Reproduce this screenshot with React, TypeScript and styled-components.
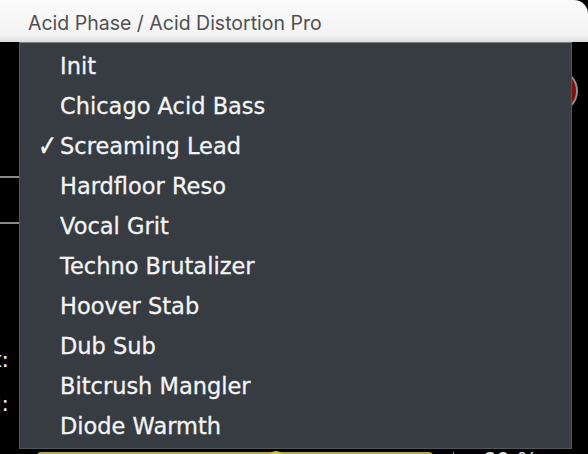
import React from "react";
import styled, { createGlobalStyle } from "styled-components";

const Global = createGlobalStyle`
  html, body { margin: 0; padding: 0; background: #000; }
  body { width: 588px; height: 454px; overflow: hidden; }
  * { box-sizing: border-box; }
`;

const Window = styled.div`
  position: relative;
  width: 588px;
  height: 454px;
  background: #000;
  overflow: hidden;
  display: flex;
  flex-direction: column;
`;

const TitleBar = styled.div`
  height: 42px;
  flex: none;
  display: flex;
  align-items: center;
  padding: 3px 0 0 28px;
  background: linear-gradient(#fbfbfb, #f3f3f3 85%, #dcdcdc);
  border-top-right-radius: 14px;
  font-family: Inter, "Open Sans", sans-serif;
  font-size: 19.5px;
  color: #505050;
`;

const Body = styled.div`
  flex: 1;
  display: flex;
  flex-direction: column;
  font-family: "DejaVu Sans", sans-serif;
  color: #f2f2f2;
`;

const KnobRow = styled.div`
  height: 98px;
  display: flex;
  align-items: center;
  justify-content: flex-end;
  padding-right: 10px;
`;

const Knob = styled.div`
  width: 44px;
  height: 44px;
  border-radius: 50%;
  border: 2px solid #8e9196;
  background: radial-gradient(circle at 40% 40%, #b52018, #7a0d08 70%);
`;

const Rule = styled.div<{ $gap: number }>`
  height: 2px;
  width: 320px;
  margin-top: ${(p) => p.$gap}px;
  background: #8a8a8a;
`;

const ParamRow = styled.div<{ $gap?: number }>`
  height: 44px;
  margin-top: ${(p) => p.$gap ?? 0}px;
  display: flex;
  align-items: center;
`;

const ParamLabel = styled.div`
  width: 9px;
  display: flex;
  justify-content: flex-end;
  white-space: nowrap;
  font-size: 22px;
  line-height: 44px;
`;

const SliderRow = styled.div`
  margin-top: 24px;
  height: 30px;
  display: flex;
  align-items: flex-start;
  padding-left: 37px;
`;

const Track = styled.div`
  position: relative;
  margin-top: 2px;
  width: 396px;
  height: 8px;
  border-radius: 4px;
  background: #b3a656;
`;

const Thumb = styled.div`
  position: absolute;
  top: -1px;
  width: 18px;
  height: 18px;
  border-radius: 50%;
  background: #d8c24a;
`;

const Divider = styled.div`
  margin-left: 20px;
  width: 1px;
  height: 30px;
  margin-top: 2px;
  background: #8a8a8a;
`;

const Value = styled.div`
  margin-left: 28px;
  font-family: "DejaVu Sans", sans-serif;
  font-size: 22px;
  line-height: 1;
  color: #e6e6e6;
`;

const Menu = styled.ul`
  position: absolute;
  left: 19px;
  top: 42px;
  width: 553px;
  height: 407px;
  margin: 0;
  padding: 3px 0 0;
  list-style: none;
  background: #363c42;
  border: 1px solid #50565c;
  border-top-color: #7d8084;
  font-family: "DejaVu Sans", sans-serif;
  font-size: 22.5px;
  color: #f4f4f4;
  -webkit-text-stroke: 0.3px #f4f4f4;
`;

const Item = styled.li`
  height: 40px;
  display: flex;
  align-items: center;
  padding-left: 18px;
`;

const Check = styled.span`
  display: inline-block;
  width: 22px;
  flex: none;
  font-size: 23px;
  font-weight: bold;
  line-height: 1;
  transform: scaleY(1.3);
  transform-origin: 50% 60%;
`;

const presets = [
  "Init",
  "Chicago Acid Bass",
  "Screaming Lead",
  "Hardfloor Reso",
  "Vocal Grit",
  "Techno Brutalizer",
  "Hoover Stab",
  "Dub Sub",
  "Bitcrush Mangler",
  "Diode Warmth",
];

const selected = "Screaming Lead";

export default function App() {
  return (
    <>
      <Global />
      <Window>
        <TitleBar>Acid Phase / Acid Distortion Pro</TitleBar>
        <Body>
          <KnobRow>
            <Knob />
          </KnobRow>
          <Rule $gap={36} />
          <Rule $gap={44} />
          <ParamRow $gap={114}>
            <ParamLabel>Drive Amount:</ParamLabel>
          </ParamRow>
          <ParamRow>
            <ParamLabel>Output Level:</ParamLabel>
          </ParamRow>
          <SliderRow>
            <Track>
              <Thumb style={{ left: `${((276 - 37 - 9) / 396) * 100}%` }} />
            </Track>
            <Divider />
            <Value>60 %</Value>
          </SliderRow>
        </Body>
        <Menu>
          {presets.map((p) => (
            <Item key={p}>
              <Check>{p === selected ? "✓" : ""}</Check>
              {p}
            </Item>
          ))}
        </Menu>
      </Window>
    </>
  );
}
